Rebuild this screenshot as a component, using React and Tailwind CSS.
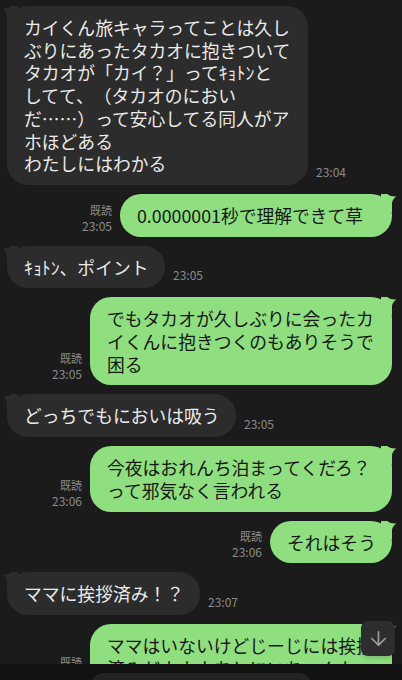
import React from 'react';
import { ArrowDown } from 'lucide-react';

const font = { fontFamily: '"Noto Sans CJK JP", "Noto Sans", sans-serif' };

function TailLeft() {
  return (
    <svg className="absolute -left-[5px] top-0" width="16" height="18" viewBox="0 0 16 18">
      <path d="M0.5 2.5 Q6 3 10 0 L16 0 L16 18 L5 18 L5 9 Q4.5 5 0.5 2.5 Z" fill="#2c2c2c" />
    </svg>
  );
}

function TailRight() {
  return (
    <svg className="absolute -right-[5px] top-0" width="16" height="18" viewBox="0 0 16 18">
      <path d="M15.5 2.5 Q10 3 6 0 L0 0 L0 18 L11 18 L11 9 Q11.5 5 15.5 2.5 Z" fill="#8fdf80" />
    </svg>
  );
}

function Received({ lines, time, width }) {
  return (
    <div className="flex items-end pl-[7px] gap-[8px]">
      <div className={`relative bg-[#2c2c2c] rounded-[21px] pl-[17px] pr-[14px] py-[10px] text-[17.8px] leading-[22.7px] text-[#ebebeb] whitespace-nowrap [text-spacing-trim:space-all] ${width || ''}`}>
        <TailLeft />
        <div className="relative">
          {lines.map((l, i) => (
            <div key={i}>{l}</div>
          ))}
        </div>
      </div>
      <div className="text-[12px] text-[#8b8b8b] pb-[4px]">{time}</div>
    </div>
  );
}

function Sent({ lines, time, width }) {
  return (
    <div className="flex items-end justify-end pr-[10px] gap-[8px]">
      <div className="flex flex-col items-end text-[12px] leading-[16px] text-[#8b8b8b] pb-[3px]">
        <span className="text-[11px]">既読</span>
        <span>{time}</span>
      </div>
      <div className={`relative bg-[#8fdf80] rounded-[21px] pl-[17px] pr-[14px] py-[10px] text-[17.8px] leading-[22.7px] text-[#161616] whitespace-nowrap [text-spacing-trim:space-all] ${width || ''}`}>
        <TailRight />
        <div className="relative">
          {lines.map((l, i) => (
            <div key={i}>{l}</div>
          ))}
        </div>
      </div>
    </div>
  );
}

export default function App() {
  return (
    <div className="h-[680px] w-[402px] bg-[#1b1b1b] flex flex-col overflow-hidden" style={font}>
      <div className="relative flex-1 overflow-hidden">
        <div className="flex flex-col gap-[9px] pt-[6px]">
          <Received
            time="23:04"
            width="w-[301px]"
            lines={[
              'カイくん旅キャラってことは久し',
              'ぶりにあったタカオに抱きついて',
              'タカオが「カイ？」ってｷｮﾄﾝと',
              'してて、（タカオのにおい',
              'だ……）って安心してる同人がア',
              'ホほどある',
              'わたしにはわかる',
            ]}
          />
          <Sent time="23:05" width="w-[272px]" lines={['0.0000001秒で理解できて草']} />
          <Received time="23:05" width="w-[158px]" lines={['ｷｮﾄﾝ、ポイント']} />
          <Sent
            time="23:05"
            width="w-[302px]"
            lines={['でもタカオが久しぶりに会ったカ', 'イくんに抱きつくのもありそうで', '困る']}
          />
          <Received time="23:05" width="w-[229px]" lines={['どっちでもにおいは吸う']} />
          <Sent
            time="23:06"
            width="w-[302px]"
            lines={['今夜はおれんち泊まってくだろ？', 'って邪気なく言われる']}
          />
          <Sent time="23:06" width="w-[122px]" lines={['それはそう']} />
          <Received time="23:07" width="w-[193px]" lines={['ママに挨拶済み！？']} />
          <Sent
            time="23:07"
            width="w-[302px]"
            lines={['ママはいないけどじーじには挨拶', '済みだよよよあとにいちゃんも']}
          />
        </div>
        <button className="absolute right-[7px] top-[621px] w-[34px] h-[35px] rounded-[7px] bg-[#2e2e2e] flex items-center justify-center shadow-md">
          <ArrowDown size={23} color="#9c9c9c" strokeWidth={1.8} />
        </button>
      </div>
      <div className="h-[16px] bg-[#121212] flex justify-center">
        <div className="mt-[9px] w-[220px] h-[20px] rounded-t-[12px] bg-[#232323]" />
      </div>
    </div>
  );
}
